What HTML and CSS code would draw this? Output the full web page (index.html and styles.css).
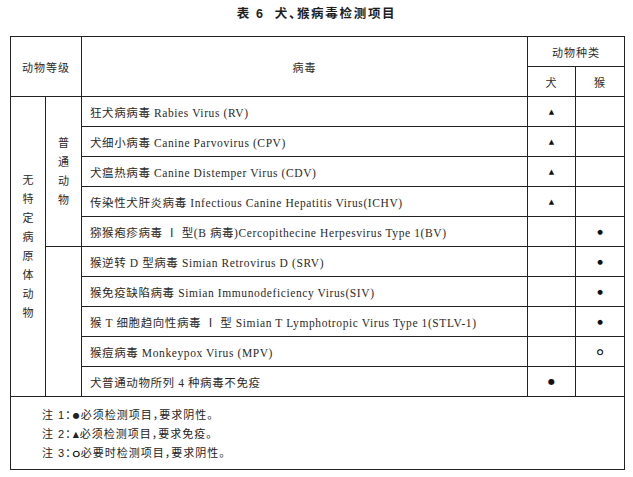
FILE: index.html
```html
<!DOCTYPE html>
<html lang="zh-CN">
<head>
<meta charset="utf-8">
<title>表 6 犬、猴病毒检测项目</title>
<link rel="stylesheet" href="styles.css">
</head>
<body>
<div class="page">
  <div class="title">表 6<span class="gap"></span>犬<span class="halt">、</span>猴病毒检测项目</div>
  <table class="grid">
    <colgroup>
      <col class="c1"><col class="c2"><col class="c3"><col class="c4"><col class="c5">
    </colgroup>
    <thead>
      <tr class="hrow">
        <th colspan="2" rowspan="2" class="head">动物等级</th>
        <th rowspan="2" class="head">病毒</th>
        <th colspan="2" class="head">动物种类</th>
      </tr>
      <tr class="hrow">
        <th class="head">犬</th>
        <th class="head">猴</th>
      </tr>
    </thead>
    <tbody>
      <tr>
        <td rowspan="10" class="vert"><div class="vtext">无特定病原体动物</div></td>
        <td rowspan="5" class="vert"><div class="vtext">普通动物</div></td>
        <td class="virus">狂犬病病毒 Rabies Virus (RV)</td>
        <td class="mark"><span class="tri">▲</span></td>
        <td class="mark"></td>
      </tr>
      <tr>
        <td class="virus">犬细小病毒 Canine Parvovirus (CPV)</td>
        <td class="mark"><span class="tri">▲</span></td>
        <td class="mark"></td>
      </tr>
      <tr>
        <td class="virus">犬瘟热病毒 Canine Distemper Virus (CDV)</td>
        <td class="mark"><span class="tri">▲</span></td>
        <td class="mark"></td>
      </tr>
      <tr>
        <td class="virus">传染性犬肝炎病毒 Infectious Canine Hepatitis Virus(ICHV)</td>
        <td class="mark"><span class="tri">▲</span></td>
        <td class="mark"></td>
      </tr>
      <tr>
        <td class="virus">猕猴疱疹病毒 Ⅰ 型(B 病毒)Cercopithecine Herpesvirus Type 1(BV)</td>
        <td class="mark"></td>
        <td class="mark"><span class="dot">●</span></td>
      </tr>
      <tr>
        <td rowspan="5" class="vert"></td>
        <td class="virus">猴逆转 D 型病毒 Simian Retrovirus D (SRV)</td>
        <td class="mark"></td>
        <td class="mark"><span class="dot">●</span></td>
      </tr>
      <tr>
        <td class="virus">猴免疫缺陷病毒 Simian Immunodeficiency Virus(SIV)</td>
        <td class="mark"></td>
        <td class="mark"><span class="dot">●</span></td>
      </tr>
      <tr>
        <td class="virus">猴 T 细胞趋向性病毒 Ⅰ 型 Simian T Lymphotropic Virus Type 1(STLV-1)</td>
        <td class="mark"></td>
        <td class="mark"><span class="dot">●</span></td>
      </tr>
      <tr>
        <td class="virus">猴痘病毒 Monkeypox Virus (MPV)</td>
        <td class="mark"></td>
        <td class="mark"><span class="ring">○</span></td>
      </tr>
      <tr>
        <td class="virus">犬普通动物所列 4 种病毒不免疫</td>
        <td class="mark"><span class="dot big">●</span></td>
        <td class="mark"></td>
      </tr>
    </tbody>
    <tfoot>
      <tr>
        <td colspan="5" class="notes">
          <p>注 1<span class="halt">：</span><span class="nsym">●</span>必须检测项目<span class="halt">，</span>要求阴性。</p>
          <p>注 2<span class="halt">：</span><span class="nsym">▲</span>必须检测项目<span class="halt">，</span>要求免疫。</p>
          <p>注 3<span class="halt">：</span><span class="nsym ring">○</span>必要时检测项目<span class="halt">，</span>要求阴性。</p>
        </td>
      </tr>
    </tfoot>
  </table>
</div>
</body>
</html>
```

FILE: styles.css
```css
html, body {
  margin: 0;
  padding: 0;
  background: #ffffff;
}

body {
  font-family: "Liberation Serif", "Noto Sans CJK SC", serif;
  color: #2a2a2a;
}

.page {
  width: 633px;
}

.title {
  height: 36px;
  box-sizing: border-box;
  padding-top: 4px;
  line-height: 17px;
  text-align: center;
  font-family: "Liberation Sans", "Noto Sans CJK SC", sans-serif;
  font-weight: bold;
  font-size: 12.5px;
  letter-spacing: 1.7px;
  color: #1e1e1e;
}

.title .gap {
  display: inline-block;
  width: 10px;
}

.halt {
  font-feature-settings: "halt";
  font-family: "Noto Sans CJK SC", sans-serif;
}

.grid {
  border-collapse: collapse;
  table-layout: fixed;
  width: 615px;
  margin-left: 10px;
  font-size: 11px;
  letter-spacing: 1px;
  font-family: "Liberation Serif", "Noto Sans CJK SC", serif;
}

.c1 { width: 35px; }
.c2 { width: 36px; }
.c3 { width: 446px; }
.c4 { width: 48px; }
.c5 { width: 49px; }

.grid th,
.grid td {
  border: 1px solid #222;
  padding: 0;
}

.grid tr {
  height: 30px;
}

.head {
  font-weight: normal;
  text-align: center;
  vertical-align: middle;
}

.vert {
  vertical-align: middle;
  text-align: center;
}

.vtext {
  width: 11px;
  margin: 0 auto;
  line-height: 19px;
  letter-spacing: 0;
}

.virus {
  padding-left: 8px !important;
  white-space: nowrap;
  font-size: 11.5px;
  letter-spacing: 0.6px;
}

.mark {
  text-align: center;
  vertical-align: middle;
  letter-spacing: 0;
  font-family: "DejaVu Sans", sans-serif;
  color: #111;
  line-height: 10px;
}

.tri {
  font-size: 7px;
}

.dot {
  font-size: 6.5px;
}

.dot.big {
  font-size: 8px;
}

.ring {
  font-size: 7px;
  -webkit-text-stroke: 0.6px #111;
}

.notes {
  height: 72px;
  padding-left: 31px !important;
  vertical-align: middle;
  font-family: "Liberation Sans", "Noto Sans CJK SC", sans-serif;
  font-size: 11px;
  letter-spacing: 1px;
  color: #222;
}

.notes p {
  margin: 0;
  height: 19px;
  line-height: 19px;
}

.nsym {
  font-family: "DejaVu Sans", sans-serif;
  font-size: 8px;
  letter-spacing: 0;
  padding: 0 1px;
  vertical-align: 1px;
  line-height: 0;
}
```
